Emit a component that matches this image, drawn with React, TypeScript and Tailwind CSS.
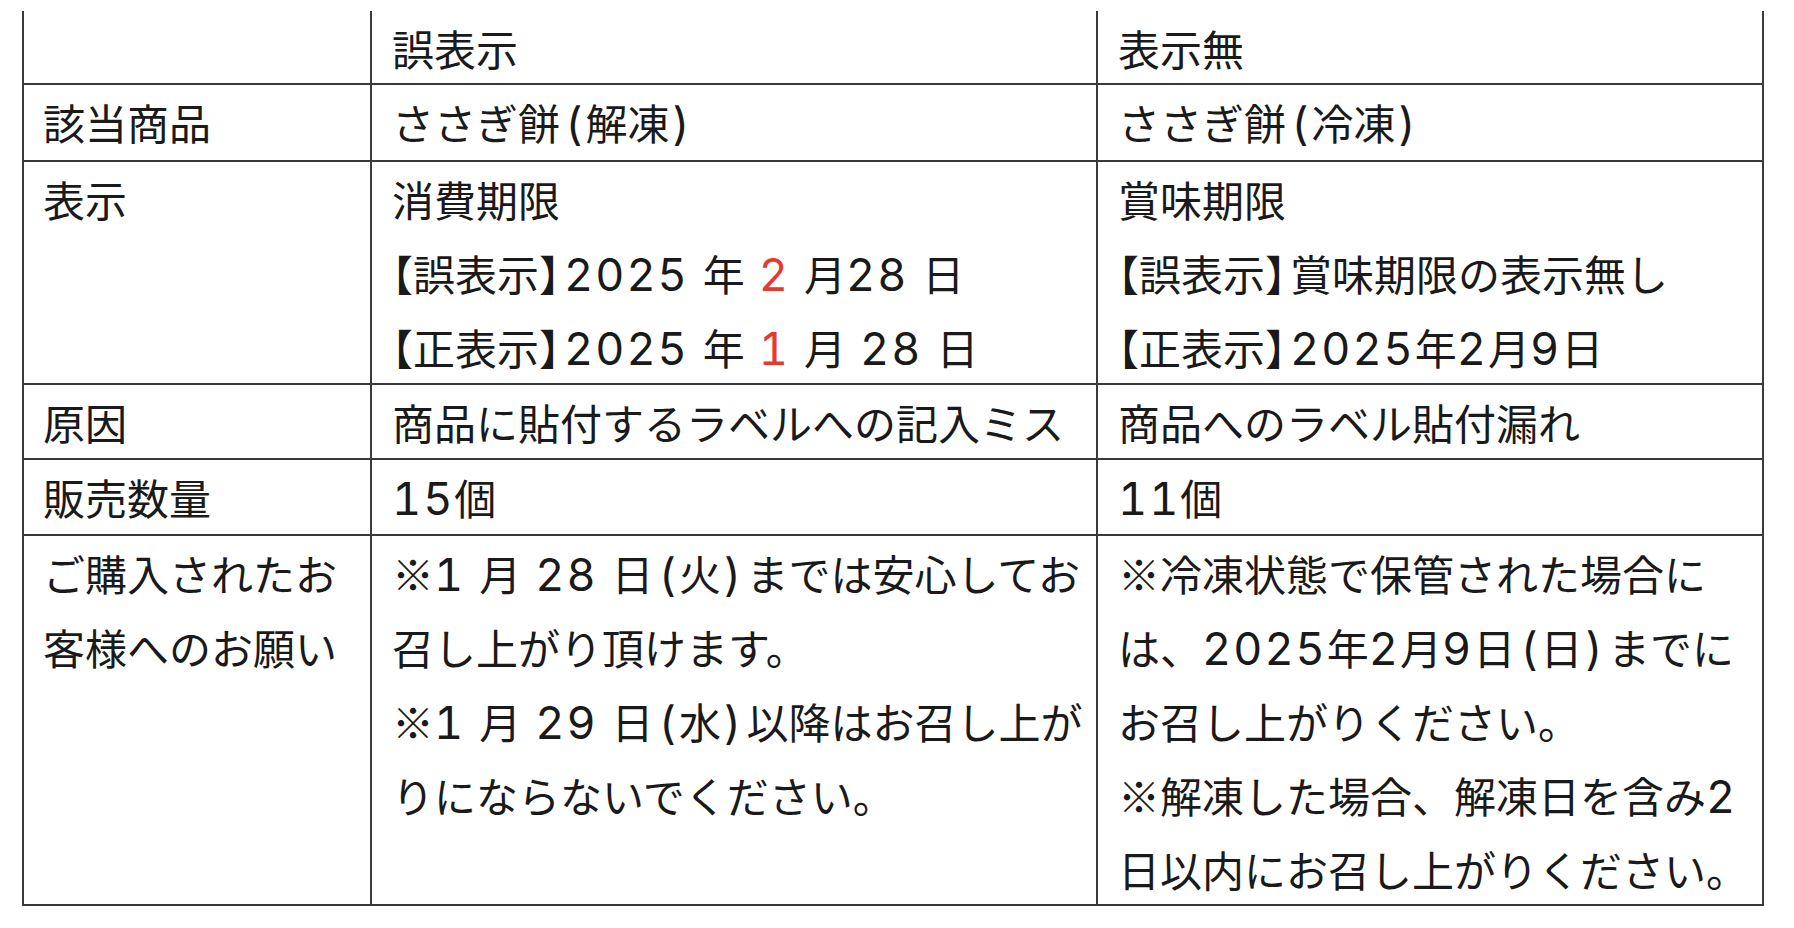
import React from "react";

const font = {
  fontFamily: '"Noto Sans CJK JP", "Noto Sans", sans-serif',
};

function Lat({ children, red }: { children: React.ReactNode; red?: boolean }) {
  return (
    <span
      className={`font-['Inter'] tabular-nums text-[45px] font-normal leading-none tracking-[2px] ${red ? "text-[#e53a30]" : ""}`}
    >
      {children}
    </span>
  );
}

function Paren({ children }: { children: React.ReactNode }) {
  const open = children === "(";
  return (
    <span
      className={`font-['Inter'] text-[45px] leading-none ${open ? "ml-[6px] mr-[3px]" : "ml-[3px] mr-[6px]"}`}
    >
      {children}
    </span>
  );
}

function Open() {
  return <span className="[font-feature-settings:'halt']">【</span>;
}
function Close() {
  return <span className="[font-feature-settings:'halt'] mr-[4px]">】</span>;
}

function fmt(s: string): React.ReactNode {
  const parts = s.split(/([0-9]+|[()【】])/);
  return (
    <>
      {parts.map((p, i) => {
        if (!p) return null;
        if (/^[0-9]+$/.test(p)) return <Lat key={i}>{p}</Lat>;
        if (p === "(" || p === ")") return <Paren key={i}>{p}</Paren>;
        if (p === "【") return <Open key={i} />;
        if (p === "】") return <Close key={i} />;
        return <React.Fragment key={i}>{p}</React.Fragment>;
      })}
    </>
  );
}

function Cell({
  lines,
  first,
  className = "",
}: {
  lines: React.ReactNode[];
  first?: boolean;
  className?: string;
}) {
  return (
    <div
      className={`border-r-2 border-b-2 border-[#3a3a3a] ${first ? "border-l-2 pl-[19px]" : "pl-[20px]"} ${className}`}
    >
      {lines.map((l, i) => (
        <div key={i} className="h-[74px] leading-[74px] whitespace-nowrap">
          {typeof l === "string" ? fmt(l) : l}
        </div>
      ))}
    </div>
  );
}

export default function App() {
  const rows: { label: React.ReactNode[]; a: React.ReactNode[]; b: React.ReactNode[]; h: string }[] = [
    { label: [""], a: ["誤表示"], b: ["表示無"], h: "h-[74px]" },
    { label: ["該当商品"], a: ["ささぎ餅(解凍)"], b: ["ささぎ餅(冷凍)"], h: "h-[77px]" },
    {
      label: ["表示"],
      a: [
        "消費期限",
        <>
          <Open />誤表示<Close />
          <Lat>2025</Lat> 年 <Lat red>2</Lat> 月<Lat>28</Lat> 日
        </>,
        <>
          <Open />正表示<Close />
          <Lat>2025</Lat> 年 <Lat red>1</Lat> 月 <Lat>28</Lat> 日
        </>,
      ],
      b: ["賞味期限", "【誤表示】賞味期限の表示無し", "【正表示】2025年2月9日"],
      h: "h-[223px]",
    },
    { label: ["原因"], a: ["商品に貼付するラベルへの記入ミス"], b: ["商品へのラベル貼付漏れ"], h: "h-[75px]" },
    { label: ["販売数量"], a: ["15個"], b: ["11個"], h: "h-[76px]" },
    {
      label: ["ご購入されたお", "客様へのお願い"],
      a: [
        "※1 月 28 日(火)までは安心してお",
        "召し上がり頂けます。",
        "※1 月 29 日(水)以降はお召し上が",
        "りにならないでください。",
      ],
      b: [
        "※冷凍状態で保管された場合に",
        "は、2025年2月9日(日)までに",
        "お召し上がりください。",
        "※解凍した場合、解凍日を含み2",
        "日以内にお召し上がりください。",
      ],
      h: "h-[370px]",
    },
  ];

  return (
    <div
      className="w-[1794px] h-[928px] bg-white text-[#1a1a1a] text-[42px] [word-spacing:4.6px]"
      style={font}
    >
      <div className="pt-[11px] pl-[22px]">
        <div className="grid grid-cols-[350px_726px_666px] w-[1742px]">
          {rows.map((r, i) => (
            <React.Fragment key={i}>
              <Cell first lines={r.label} className={r.h} />
              <Cell lines={r.a} className={r.h} />
              <Cell lines={r.b} className={r.h} />
            </React.Fragment>
          ))}
        </div>
      </div>
    </div>
  );
}
